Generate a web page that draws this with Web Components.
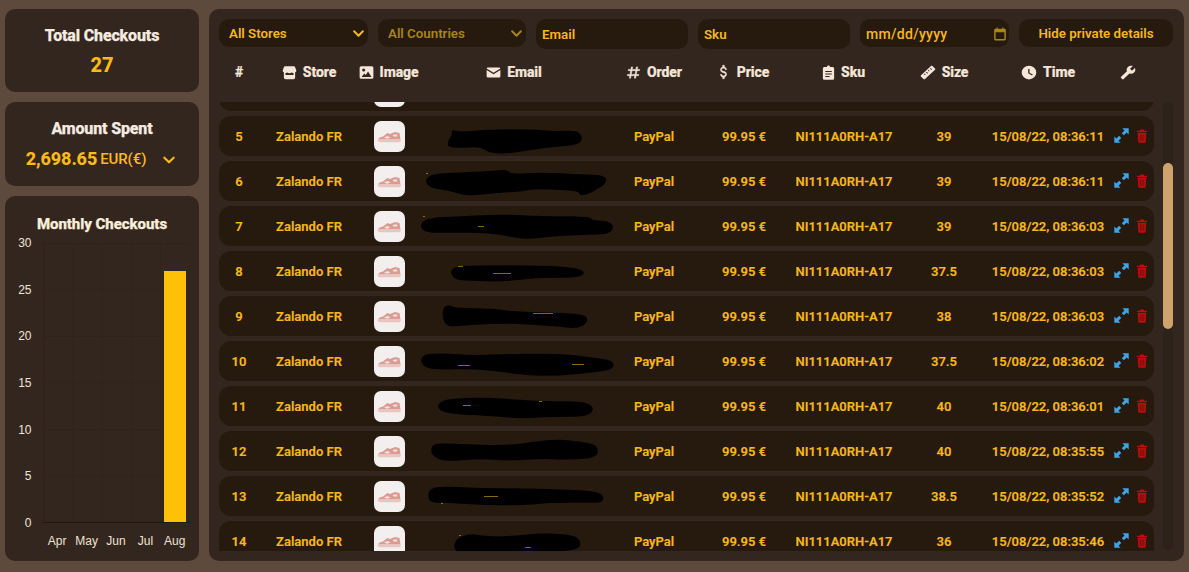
<!DOCTYPE html>
<html lang="en">
<head>
<meta charset="utf-8">
<title>Checkouts</title>
<style>
html,body{margin:0;height:100%;background:#5e4a3d;overflow:hidden}
body{font-family:Roboto,"Liberation Sans",sans-serif}
</style>
</head>
<body>
<checkout-app></checkout-app>
<script>
const ICONS={
 store:'<path fill-rule="evenodd" d="M5 2h14a2 2 0 0 1 2 1.400L23 9a3 3 0 0 1-2 2.600V20a2.600 2.600 0 0 1-2.600 2.600H5.600A2.600 2.600 0 0 1 3 20v-8.400A3 3 0 0 1 1 9l2-5.600A2 2 0 0 1 5 2zM5.600 12.600V16h12.800v-3.400a5 5 0 0 1-3.200-.6 4.600 4.600 0 0 1-3.200 1 4.600 4.600 0 0 1-3.200-1 5 5 0 0 1-3.200.6z"/>',
 image:'<path fill-rule="evenodd" d="M3.500 2h17A2.500 2.500 0 0 1 23 4.500v15a2.500 2.500 0 0 1-2.500 2.500h-17A2.500 2.500 0 0 1 1 19.500v-15A2.500 2.500 0 0 1 3.500 2zM4 19h16l-5.500-8.500-3.700 5.500-2.300-2.500zM7.500 5.500a2.500 2.500 0 1 0 0 5 2.500 2.500 0 0 0 0-5z"/>',
 mail:'<path d="M3 4h18a2 2 0 0 1 2 1.600L12 12.500 1 5.600A2 2 0 0 1 3 4zM1 8l11 6.800L23 8v10a2 2 0 0 1-2 2H3a2 2 0 0 1-2-2z"/>',
 pound:'<path d="M5.410 21L6.120 17H2.120L2.470 15H6.470L7.530 9H3.530L3.880 7H7.880L8.590 3H10.590L9.880 7H15.880L16.590 3H18.590L17.880 7H21.880L21.530 9H17.530L16.470 15H20.470L20.120 17H16.120L15.410 21H13.410L14.120 17H8.120L7.410 21H5.410M9.530 9L8.470 15H14.470L15.530 9H9.530Z" stroke="currentColor" stroke-width=".9"/>',
 dollar:'<path d="M7,15H9C9,16.08 10.37,17 12,17C13.63,17 15,16.08 15,15C15,13.9 13.96,13.5 11.76,12.97C9.64,12.44 7,11.78 7,9C7,7.21 8.47,5.69 10.5,5.18V3H13.5V5.18C15.53,5.69 17,7.21 17,9H15C15,7.92 13.63,7 12,7C10.37,7 9,7.92 9,9C9,10.1 10.04,10.5 12.24,11.03C14.36,11.56 17,12.22 17,15C17,16.79 15.53,18.31 13.5,18.82V21H10.5V18.82C8.47,18.31 7,16.79 7,15Z" stroke="currentColor" stroke-width=".5"/>',
 clip:'<path fill-rule="evenodd" d="M12 0.800c1.300 0 2.400.8 2.800 2.200H20a2.400 2.400 0 0 1 2.400 2.400V21a2.400 2.400 0 0 1-2.400 2.400H4A2.400 2.400 0 0 1 1.600 21V5.400A2.400 2.400 0 0 1 4 3h5.200c.4-1.400 1.500-2.200 2.800-2.200zM6 9.500v1.600h12V9.500zm0 4v1.600h12v-1.600zm0 4v1.600h8v-1.600z"/>',
 ruler:'<path fill-rule="evenodd" d="M16.500 1.500a1.500 1.500 0 0 1 2.100 0l3.900 3.900a1.500 1.500 0 0 1 0 2.100L7.500 22.500a1.500 1.500 0 0 1-2.100 0l-3.900-3.900a1.500 1.500 0 0 1 0-2.100zM15.800 4.700l-.9.900 2.200 2.200.9-.9zM12.800 7.700l-.9.900 1.600 1.600.9-.9zM9.800 10.700l-.9.900 2.200 2.200.9-.9zM6.800 13.700l-.9.900 1.600 1.600.9-.9z"/>',
 clock:'<path d="M12,1A11,11 0 0,0 1,12A11,11 0 0,0 12,23A11,11 0 0,0 23,12A11,11 0 0,0 12,1M16.600,16.800L10.800,13.200V6.500H12.800V12.200L17.700,15.100L16.600,16.800Z"/>',
 wrench:'<path transform="matrix(-1 0 0 1 24 0)" d="M22.700,19L13.600,9.900C14.500,7.600 14,4.900 12.100,3C10.100,1 7.100,0.600 4.700,1.700L9,6L6,9L1.600,4.700C0.400,7.100 0.900,10.100 2.900,12.100C4.800,14 7.500,14.500 9.800,13.600L18.900,22.700C19.300,23.100 19.900,23.100 20.300,22.700L22.600,20.400C23.100,20 23.100,19.300 22.700,19Z"/>',
 expand:'<path d="M13.500 0.500H23.500V10.500L20.200 7.200 15.800 11.600 12.400 8.200 16.800 3.800zM10.500 23.500H0.500V13.500L3.800 16.800 8.200 12.400 11.600 15.800 7.200 20.200z"/>',
 trash:'<path fill-rule="evenodd" d="M8.500 1h7l1 2H22v2.500H2V3h5.500zM3.500 7h17l-1 15a1.500 1.500 0 0 1-1.500 1.400H6A1.500 1.500 0 0 1 4.500 22zM7.700 9.500v11h1v-11zm3.800 0v11h1v-11zm3.800 0v11h1v-11z"/>',
 chevron:'<path d="M5 8.500 12 15.500 19 8.500" fill="none" stroke="currentColor" stroke-width="3.200" stroke-linecap="round" stroke-linejoin="round"/>',
 calendar:'<path fill-rule="evenodd" d="M6 1h2.200v2h7.600V1H18v2h2a2 2 0 0 1 2 2v16a2 2 0 0 1-2 2H4a2 2 0 0 1-2-2V5a2 2 0 0 1 2-2h2zM4.500 9v11.500h15V9z"/>'
};

class UiIcon extends HTMLElement{
  connectedCallback(){
    if(this.shadowRoot)return;
    const s=this.getAttribute('size')||15;
    const w=this.getAttribute('width')||s;
    const sr=this.attachShadow({mode:'open'});
    sr.innerHTML=`<style>:host{display:inline-flex;flex:none;width:${w}px;height:${s}px;color:inherit}svg{width:100%;height:100%;fill:currentColor;display:block}</style>
    <svg viewBox="0 0 24 24" preserveAspectRatio="none" aria-hidden="true">${ICONS[this.getAttribute('name')]||''}</svg>`;
  }
}
customElements.define('ui-icon',UiIcon);

class StatCard extends HTMLElement{
  constructor(){super();this.attachShadow({mode:'open'}).innerHTML=`<style>
  :host{display:flex;flex-direction:column;align-items:center;background:#33261f;border-radius:10px;color:#f9ecdf;padding-top:17px;box-sizing:border-box}
  .t{font:800 16px/20px Roboto,sans-serif;letter-spacing:-.15px;color:#f7ebe0;-webkit-text-stroke:.25px #f7ebe0}
  .v{margin-top:var(--vgap,7px);color:#fdbb14;display:flex;align-items:center}
  </style><div class="t"><slot name="title"></slot></div><div class="v"><slot></slot></div>`;}
}
customElements.define('stat-card',StatCard);

class MonthlyChart extends HTMLElement{
  constructor(){super();
    const ys=[30,25,20,15,10,5,0].map(v=>`<span>${v}</span>`).join('');
    const ms=['Apr','May','Jun','Jul','Aug'].map(v=>`<span>${v}</span>`).join('');
    this.attachShadow({mode:'open'}).innerHTML=`<style>
    :host{display:flex;flex-direction:column;background:#33261f;border-radius:10px;box-sizing:border-box;min-height:0}
    h3{margin:19px 0 0;text-align:center;font:800 15px/18px Roboto,sans-serif;letter-spacing:-.05px;color:#fbeeda;-webkit-text-stroke:.25px #fbeeda}
    .g{margin-top:10px;display:grid;grid-template-columns:37.5px 147px;grid-template-rows:280px auto}
    .y{display:flex;flex-direction:column;justify-content:space-between;align-items:flex-end;padding-right:11px;box-sizing:border-box}
    .y span,.x span{font:12px "Liberation Sans",Arial,sans-serif;color:#efe3d3}
    .y span{height:0;line-height:0}
    .p{display:grid;grid-template-columns:repeat(5,1fr);align-items:end;justify-items:center;border-left:1px solid #2e231c;border-bottom:1px solid #211710;box-sizing:border-box;
      background-image:linear-gradient(to right,#2e231c 1px,transparent 1px),linear-gradient(to bottom,#2e231c 1px,transparent 1px);background-size:29.200px 100%,100% 46.500px;background-position:28.600px 0,0 0}
    .b{grid-column:5;width:21.500px;height:90%;background:#ffc107}
    .x{grid-column:2;display:grid;grid-template-columns:repeat(5,1fr);justify-items:center;padding-top:11px}
    .x span{line-height:14px;white-space:nowrap}
    </style><h3><slot></slot></h3><div class="g"><div class="y">${ys}</div><div class="p"><div class="b"></div></div><div class="x">${ms}</div></div>`;
  }
}
customElements.define('monthly-chart',MonthlyChart);

class FilterField extends HTMLElement{
  constructor(){super();
    this.attachShadow({mode:'open'}).innerHTML=`<style>
    :host{display:flex;align-items:center;justify-content:space-between;box-sizing:border-box;height:28px;background:#26190e;border-radius:10px;padding:1px 2px 0 10px;font:600 13.300px/16px Roboto,sans-serif;color:#f5b81c;white-space:nowrap}
    :host([tall]){height:30px;padding-left:6px}
    :host([dim]){color:#a98519}
    :host([center]){justify-content:center;padding:1px 0 0}
    :host([date]){padding-left:6px;letter-spacing:.3px;font-weight:500;font-size:14px}
    </style><slot></slot><slot name="end"></slot>`;
  }
}
customElements.define('filter-field',FilterField);

const COLS='40px 100px 61px 190px 88px 92px 108px 92px 116px 48px';

class TableHead extends HTMLElement{
  constructor(){super();
    const c=[['','#',0],['store','Store',0],['image','Image',2],['mail','Email',2],['pound','Order',0],['dollar','Price',3],['clip','Sku',1],['ruler','Size',0],['clock','Time',0],['wrench','',4]];
    const widths={store:15,image:15,mail:15,pound:15,dollar:15,clip:13,ruler:16,clock:16,wrench:16};
    this.attachShadow({mode:'open'}).innerHTML=`<style>
    :host{display:grid;grid-template-columns:${COLS};width:935px;height:53px;align-items:center;padding-bottom:7px;box-sizing:border-box;padding-top:0;font:800 14px/18px Roboto,sans-serif;letter-spacing:-.1px;color:#f5e6da;-webkit-text-stroke:.2px #f5e6da}
    div{display:flex;align-items:center;justify-content:center;gap:6px}
    </style>`+c.map(([i,t,p])=>`<div style="padding-right:${p}px">${i?`<ui-icon name="${i}" size="${i==='dollar'?18:15}" width="${widths[i]}"></ui-icon>`:''}${t?`<span>${t}</span>`:''}</div>`).join('');
  }
}
customElements.define('table-head',TableHead);

class ShoeThumb extends HTMLElement{
  constructor(){super();this.attachShadow({mode:'open'}).innerHTML=`<style>
  :host{display:block;width:31px;height:31px;border-radius:7px;background:#f2efee;overflow:hidden}
  svg{display:block;width:31px;height:31px}
  </style><svg viewBox="0 0 31 31" aria-hidden="true">
  <path d="M4 18.500 Q5 16 9 15.500 L13.500 12 L16 13 L21 11 L25.500 12 L26.500 18.500z" fill="#d99c93"/>
  <path d="M10 16.500 L13.500 15 L16.500 16.500 L13 17.800z M18.500 14 L22.500 13.300 L23.500 15.300 L20 15.800z" fill="#f3e2de"/>
  <path d="M3.500 18.500 H27 L26.500 20.500 Q26 21.300 25 21.300 H6 Q3.500 21.300 3.500 18.500z" fill="#e8c6bf"/>
  </svg>`;}
}
customElements.define('shoe-thumb',ShoeThumb);

class RedactMark extends HTMLElement{
  connectedCallback(){
    if(this.shadowRoot)return;
    const pts=this.getAttribute('points').trim().split(/\s+/).map(p=>p.split(',').map(Number));
    let d='';
    const n=pts.length;
    const mid=(a,b)=>[(a[0]+b[0])/2,(a[1]+b[1])/2];
    const st=mid(pts[n-1],pts[0]);
    d=`M${st[0]} ${st[1]}`;
    pts.forEach((p,i)=>{const m=mid(p,pts[(i+1)%n]);d+=` Q${p[0]} ${p[1]} ${m[0]} ${m[1]}`;});
    const specks=(this.getAttribute('specks')||'').trim().split(/\s+/).filter(Boolean).map(s=>{const [x,y,w]=s.split(',');return `<rect x="${x}" y="${y}" width="${w}" height=".8" fill="#a8831c"/>`;}).join('');
    this.attachShadow({mode:'open'}).innerHTML=`<style>:host{position:absolute;left:-2px;top:0;width:200px;height:40px;pointer-events:none}svg{display:block;overflow:visible}</style>
    <svg width="200" height="40" viewBox="0 0 200 40" aria-hidden="true"><path d="${d}" fill="#000" stroke="#000" stroke-width="1.500" stroke-linejoin="round"/>${specks}</svg>`;
  }
}
customElements.define('redact-mark',RedactMark);

class OrderRow extends HTMLElement{
  connectedCallback(){
    if(this.shadowRoot)return;
    const a=k=>this.getAttribute(k)||'';
    const stub=this.hasAttribute('stub');
    const txt=v=>stub?'':v;
    this.attachShadow({mode:'open'}).innerHTML=`<style>
    :host{display:grid;grid-template-columns:${COLS};flex:none;height:40px;align-items:center;background:#26190e;border-radius:12px;font:600 13px/16px Roboto,sans-serif;color:#f5b81c;white-space:nowrap;-webkit-text-stroke:.15px #f5b81c}
    div{text-align:center;min-width:0;padding-top:1px}
    .img{display:flex;justify-content:center;padding:0 1px 0 0}
    .mail{position:relative;height:40px;padding:0}
    .act{display:flex;align-items:center;gap:7px;padding:0 0 1px 8px}
    .e{color:#3da5e6}.d{color:#bd0d0d}
    </style>
    <div>${txt(a('n'))}</div><div>${txt('Zalando FR')}</div><div class="img"><shoe-thumb></shoe-thumb></div>
    <div class="mail">${a('mark')?`<redact-mark points="${a('mark')}" specks="${a('specks')}"></redact-mark>`:''}</div>
    <div>${txt('PayPal')}</div><div>${txt('99.95 €')}</div><div>${txt('NI111A0RH-A17')}</div><div>${txt(a('size'))}</div><div>${txt(a('time'))}</div>
    <div class="act">${stub?'':'<ui-icon class="e" name="expand" size="15"></ui-icon><ui-icon class="d" name="trash" size="14" width="12"></ui-icon>'}</div>`;
  }
}
customElements.define('order-row',OrderRow);

const ROWS=[
 [5,'39','15/08/22, 08:36:11','34,14 42,17 72,14 112,14 137,16 157,15 163,19 163,26 152,29 127,31 102,35 87,37 72,36 62,30 47,31 30,31 31,24 35,19',''],
 [6,'39','15/08/22, 08:36:11','9,14 42,12 72,11 89,9 92,14 122,12 162,14 188,15 187,23 179,27 172,32 162,34 161,29 117,27 102,30 82,31 62,33 47,34 32,29 9,26','8,12,2'],
 [7,'39','15/08/22, 08:36:03','4,13 42,11 87,9 122,11 172,11 173,15 194,16 194,27 172,28 142,29 112,32 102,32 72,26 32,26 4,26','5,10,2 60,20,6'],
 [8,'37.5','15/08/22, 08:36:03','33,16 62,15 122,15 165,18 165,26 122,26 102,28 82,30 52,29 35,28','40,15,5 75,22,18'],
 [9,'38','15/08/22, 08:36:03','26,11 32,10 37,13 72,13 92,16 122,17 152,18 168,20 169,26 160,32 142,30 102,27 72,27 42,29 30,30 25,22','115,17,20'],
 [10,'37.5','15/08/22, 08:36:02','3,14 27,13 52,15 82,14 142,13 172,17 195,20 195,28 172,31 142,34 112,34 82,30 52,27 22,28 5,26','40,24,12 154,23,12'],
 [11,'40','15/08/22, 08:36:01','20,15 52,12 82,13 122,16 174,16 174,30 132,30 102,32 72,29 22,27','45,19,8 121,15,3'],
 [12,'40','15/08/22, 08:35:55','14,14 27,13 72,15 102,14 132,9 152,10 172,13 179,16 179,26 152,28 122,27 92,29 62,27 27,30 14,24',''],
 [13,'38.5','15/08/22, 08:35:52','11,13 27,11 62,13 102,13 142,14 177,16 185,20 184,26 172,26 132,26 102,29 62,28 27,26 11,26','66,20,14 23,27,2'],
 [14,'36','15/08/22, 08:35:46','37,19 52,13 67,16 92,16 122,13 152,14 162,19 161,29 112,31 72,29 52,31 37,31','41,14,2 107,26,6']
];

class OrderList extends HTMLElement{
  constructor(){super();
    const rows=ROWS.map(r=>`<order-row n="${r[0]}" size="${r[1]}" time="${r[2]}" mark="${r[3]}" specks="${r[4]}"></order-row>`).join('');
    this.attachShadow({mode:'open'}).innerHTML=`<style>
    :host{display:flex;gap:9px;height:449px}
    .l{width:935px;height:449px;overflow:hidden;display:flex;flex-direction:column;gap:5px}
    .l>order-row:first-child{margin-top:-31px}
    .track{width:10px;height:448px;background:#2d221a;border-radius:5px;padding-top:61px;box-sizing:border-box}
    .thumb{height:166px;border-radius:5px;background:#cfa36d}
    </style><div class="l"><order-row stub></order-row>${rows}</div><div class="track"><div class="thumb"></div></div>`;
  }
}
customElements.define('order-list',OrderList);

class CheckoutApp extends HTMLElement{
  constructor(){super();
    this.attachShadow({mode:'open'}).innerHTML=`<style>
    :host{display:grid;grid-template-columns:194px 975px;gap:10px;height:572px;padding:9px 5px 11px;box-sizing:border-box;width:1189px}
    .side{display:grid;grid-template-rows:83px 84px 365px;gap:10px;min-height:0}
    main{background:#33261f;border-radius:10px;padding:10px;box-sizing:border-box;width:975px}
    .filters{display:grid;grid-template-columns:149px 148px 152px 152px 149px 154px;gap:10px;height:30px;align-items:start}
    .big{font:800 20px/24px Roboto,sans-serif}
    .amt{font:800 18px/22px Roboto,sans-serif;letter-spacing:-.1px;margin-left:-1px}
    .cur{font:500 15px/22px Roboto,sans-serif;margin-left:3px;letter-spacing:-.1px}
    .ch{margin-left:15px;margin-top:2px}
    stat-card.a{--vgap:9px}
    </style>
    <div class="side">
      <stat-card><span slot="title">Total Checkouts</span><span class="big">27</span></stat-card>
      <stat-card class="a"><span slot="title">Amount Spent</span><span class="amt">2,698.65</span><span class="cur">EUR(€)</span><ui-icon class="ch" name="chevron" size="16"></ui-icon></stat-card>
      <monthly-chart>Monthly Checkouts</monthly-chart>
    </div>
    <main>
      <div class="filters">
        <filter-field>All Stores<ui-icon slot="end" name="chevron" size="15"></ui-icon></filter-field>
        <filter-field dim>All Countries<ui-icon slot="end" name="chevron" size="15"></ui-icon></filter-field>
        <filter-field tall>Email</filter-field>
        <filter-field tall>Sku</filter-field>
        <filter-field date>mm/dd/yyyy<ui-icon slot="end" name="calendar" size="14" style="color:#a98519;margin-right:0"></ui-icon></filter-field>
        <filter-field center>Hide private details</filter-field>
      </div>
      <table-head></table-head>
      <order-list></order-list>
    </main>`;
  }
}
customElements.define('checkout-app',CheckoutApp);
</script>
</body>
</html>
